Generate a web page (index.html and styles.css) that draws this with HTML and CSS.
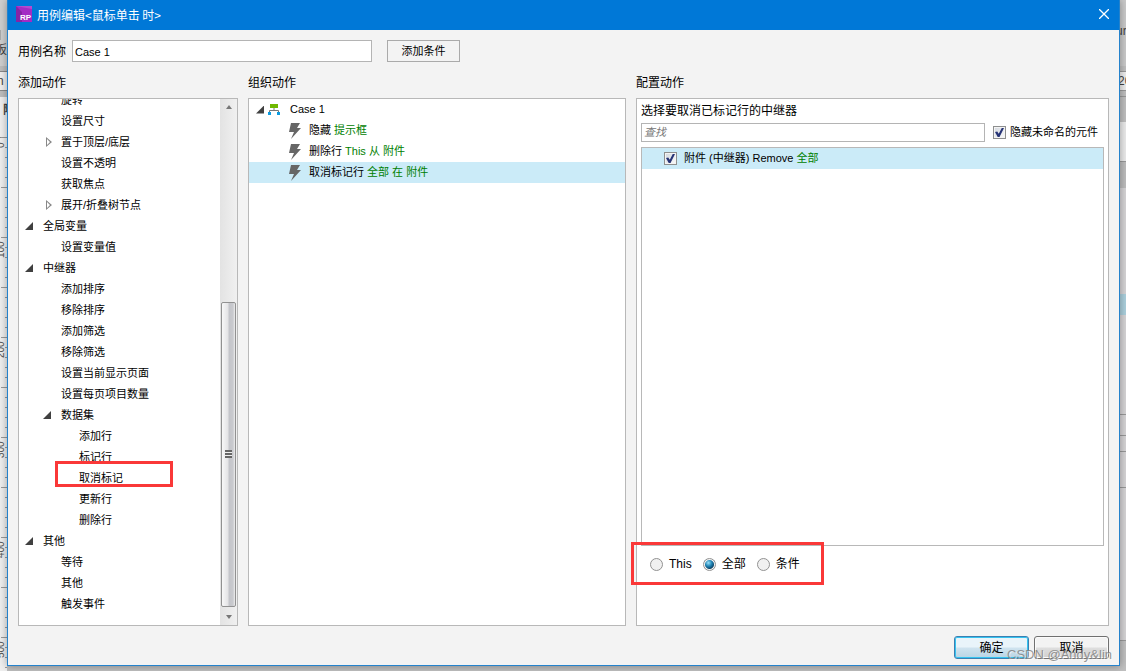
FILE: index.html
```
<!DOCTYPE html>
<html lang="zh-CN">
<head>
<meta charset="utf-8">
<title>用例编辑</title>
<link rel="stylesheet" href="styles.css">
</head>
<body>
<svg class="strip strip-left" width="7" height="671" aria-hidden="true">
  <defs>
    <pattern id="minor" y="137" width="7" height="10" patternUnits="userSpaceOnUse"><path d="M5 .5h2" stroke="#999"/></pattern>
    <pattern id="major" y="137" width="7" height="50" patternUnits="userSpaceOnUse"><path d="M1 .5h6" stroke="#999"/></pattern>
  </defs>
  <rect width="7" height="671" fill="#efefef"/>
  <rect width="7" height="66" fill="#cfcfcf"/>
  <rect y="66" width="7" height="5" fill="#bdbdbd"/>
  <rect y="91" width="7" height="6" fill="#bdbdbd"/>
  <path d="M0 30v10M0 71.500h7M0 90.500h7M0 137.500h7" stroke="#888"/>
  <rect y="137" width="7" height="534" fill="url(#minor)"/>
  <rect y="137" width="7" height="534" fill="url(#major)"/>
  <text x="-5" y="54" class="bg-text cjk">板</text>
  <text x="-3" y="85" class="bg-text">n</text>
  <text x="3" y="114" class="bg-text cjk bold">附</text>
  <g class="bg-num">
    <text transform="translate(4 148) rotate(-90)">0</text>
    <text transform="translate(4 258) rotate(-90)">100</text>
    <text transform="translate(4 358) rotate(-90)">200</text>
    <text transform="translate(4 458) rotate(-90)">300</text>
    <text transform="translate(4 558) rotate(-90)">400</text>
    <text transform="translate(4 658) rotate(-90)">500</text>
  </g>
</svg>
<main class="dialog">
  <header class="titlebar">
    <svg class="logo" width="16" height="16" viewBox="0 0 16 16" aria-hidden="true">
      <rect width="16" height="16" fill="#a32cc4"/><path d="M0 0l6 6v10H0z" fill="#8524a5"/><path d="M0 0h16v3z" fill="#b44bd0"/>
      <text x="4" y="14" class="logo-text">RP</text>
    </svg>
    <h1>用例编辑&lt;鼠标单击 时&gt;</h1>
    <button class="close" type="button" aria-label="关闭"><svg width="10" height="10" viewBox="0 0 10 10"><path d="M0 0l10 10M10 0L0 10" stroke="#fff" stroke-width="1.300"/></svg></button>
  </header>

  <form class="content">
    <div class="name-row">
      <label for="name">用例名称</label>
      <input id="name" class="field name-field" type="text" value="Case 1">
      <button class="flat-button" type="button">添加条件</button>
    </div>

    <div class="columns">
      <section class="column">
        <h2>添加动作</h2>
        <div class="panel tree-panel">
          <ul class="tree">
            <li class="l1">旋转</li>
            <li class="l1">设置尺寸</li>
            <li class="l1 closed">置于顶层/底层</li>
            <li class="l1">设置不透明</li>
            <li class="l1">获取焦点</li>
            <li class="l1 closed">展开/折叠树节点</li>
            <li class="l0 open">全局变量</li>
            <li class="l1">设置变量值</li>
            <li class="l0 open">中继器</li>
            <li class="l1">添加排序</li>
            <li class="l1">移除排序</li>
            <li class="l1">添加筛选</li>
            <li class="l1">移除筛选</li>
            <li class="l1">设置当前显示页面</li>
            <li class="l1">设置每页项目数量</li>
            <li class="l1 open">数据集</li>
            <li class="l2">添加行</li>
            <li class="l2">标记行</li>
            <li class="l2">取消标记<span class="mark mark-tree"></span></li>
            <li class="l2">更新行</li>
            <li class="l2">删除行</li>
            <li class="l0 open">其他</li>
            <li class="l1">等待</li>
            <li class="l1">其他</li>
            <li class="l1">触发事件</li>
          </ul>
          <div class="scrollbar" aria-hidden="true">
            <span class="arrow arrow-up"></span>
            <div class="track"><div class="thumb"><span class="grip"></span></div></div>
            <span class="arrow arrow-down"></span>
          </div>
        </div>
      </section>

      <section class="column">
        <h2>组织动作</h2>
        <div class="panel">
          <ul class="actions">
            <li class="case open"><svg width="12" height="12" viewBox="0 0 12 12" aria-hidden="true"><path d="M2 0h8v4H2z" fill="#6fb800"/><path d="M6 4v2M1.500 8V6.500h9V8" fill="none" stroke="#777"/><path d="M0 8h3v3H0zM9 8h3v3H9z" fill="#0b9be0"/></svg>Case 1</li>
            <li><svg width="12" height="16" viewBox="0 0 12 16" aria-hidden="true"><path d="M2 0h9L8 5h4L2 16l3-7H0z" fill="#666"/></svg><span>隐藏 <em>提示框</em></span></li>
            <li><svg width="12" height="16" viewBox="0 0 12 16" aria-hidden="true"><path d="M2 0h9L8 5h4L2 16l3-7H0z" fill="#666"/></svg><span>删除行 <em>This 从 附件</em></span></li>
            <li class="selected"><svg width="12" height="16" viewBox="0 0 12 16" aria-hidden="true"><path d="M2 0h9L8 5h4L2 16l3-7H0z" fill="#666"/></svg><span>取消标记行 <em>全部 在 附件</em></span></li>
          </ul>
        </div>
      </section>

      <section class="column">
        <h2>配置动作</h2>
        <div class="panel config">
          <h3>选择要取消已标记行的中继器</h3>
          <div class="search-row">
            <input class="field search" type="text" placeholder="查找" aria-label="查找">
            <label class="check"><input type="checkbox" checked>隐藏未命名的元件</label>
          </div>
          <div class="targets">
            <label class="check target"><input type="checkbox" checked><span>附件 (中继器) Remove <em>全部</em></span></label>
          </div>
          <div class="radios">
            <label><input type="radio" name="scope">This</label>
            <label><input type="radio" name="scope" checked>全部</label>
            <label><input type="radio" name="scope">条件</label>
            <span class="mark mark-radios"></span>
          </div>
        </div>
      </section>
    </div>

    <footer>
      <button class="glossy primary" type="button">确定</button>
      <button class="glossy" type="button">取消</button>
      <span class="watermark">CSDN @Andy&amp;lin</span>
    </footer>
  </form>
</main>
<svg class="strip strip-right" width="6" height="671" aria-hidden="true">
  <rect width="6" height="671" fill="#d6d4d6"/>
  <rect width="6" height="66" fill="#cacaca"/>
  <rect y="66" width="6" height="56" fill="#bfbfbf"/>
  <rect y="72" width="6" height="18" fill="#eee"/>
  <rect y="122" width="6" height="40" fill="#ebebeb"/>
  <rect y="162" width="6" height="26" fill="#bdbdbd"/>
  <rect y="294" width="6" height="21" fill="#acd0dd"/>
  <rect y="641" width="6" height="30" fill="#c0c0c0"/>
  <path d="M0 71.500h6M0 90.500h6M0 96.500h6M0 161.500h6M0 414.500h6M0 435.500h6M0 451.500h6M0 487.500h6M0 640.500h6" stroke="#999"/>
  <text x="-4" y="35" class="bg-text">ur</text>
  <text x="-2" y="85" class="bg-text">20</text>
</svg>
</body>
</html>
```
FILE: styles.css
```
* { box-sizing: border-box; }

body {
  margin: 0;
  height: 100vh;
  min-height: 600px;
  padding-bottom: 5px;
  display: grid;
  grid-template-columns: 7px minmax(0, 1fr) 6px;
  grid-template-rows: minmax(0, 1fr);
  background: #bfbfbf;
  overflow: hidden;
  color: #000;
  font: 11px/21px "Liberation Sans", Arial, "Noto Sans CJK SC", sans-serif;
}

h1, h2, h3, ul { margin: 0; padding: 0; font-weight: normal; font-size: 12px; }
ul { list-style: none; font-size: 11px; }
em { font-style: normal; color: #008000; }
button, input { font: inherit; color: inherit; margin: 0; }

.strip { display: block; }
.bg-text { font-size: 12px; fill: #444; }
.bold { font-weight: bold; }
.bg-num { font-size: 10px; fill: #555; }

.dialog {
  position: relative;
  display: flex;
  flex-direction: column;
  background: #f3f3f3;
  border: 1px solid #2482cc;
  border-top: 0;
  box-shadow: 0 0 8px rgba(0, 0, 0, .35);
}

.titlebar {
  flex: none;
  height: 30px;
  display: flex;
  align-items: center;
  gap: 5px;
  padding: 0 10px 2px 8px;
  background: #0078d7;
  color: #fff;
}
.titlebar h1 { line-height: 20px; padding-top: 2px; font-family: "Noto Sans CJK SC", sans-serif; }
.logo-text { font-size: 8px; font-weight: bold; fill: #fff; }
.close {
  margin-left: auto;
  padding: 0;
  width: 10px;
  height: 10px;
  border: 0;
  background: none;
}
.close svg { display: block; }

.content {
  flex: 1;
  min-height: 0;
  display: flex;
  flex-direction: column;
  padding: 10px 10px 6px;
}

.name-row { display: flex; align-items: center; height: 22px; font-size: 12px; }
.name-row label { padding-top: 2px; }
.field {
  height: 22px;
  padding: 2px 2px 0;
  border: 1px solid #b4b4b4;
  border-radius: 0;
  background: #fff;
  font-size: 11px;
  outline: 0;
}
.name-field { width: 300px; margin: 0 15px 0 6px; }
.flat-button {
  width: 73px;
  height: 22px;
  padding: 0;
  border: 1px solid #aaa;
  background: #f3f3f3;
  font-size: 11px;
  line-height: 20px;
}

.columns {
  flex: 1;
  min-height: 0;
  margin-top: 10px;
  display: grid;
  grid-template-columns: 220px minmax(0, 378fr) minmax(0, 473fr);
  gap: 10px;
}
.column { display: flex; flex-direction: column; min-width: 0; min-height: 0; }
h2 { line-height: 22px; margin-bottom: 4px; }
.panel {
  flex: 1;
  min-height: 0;
  border: 1px solid #b8b8b8;
  background: #fff;
}

.tree-panel { display: flex; overflow: hidden; }
.tree {
  flex: 1;
  display: flex;
  flex-direction: column;
  justify-content: flex-end;
  padding-bottom: 10px;
}
.tree li { position: relative; flex: none; height: 21px; white-space: nowrap; }
.l0 { padding-left: 24px; }
.l1 { padding-left: 42px; }
.l2 { padding-left: 60px; }
.open::before, .closed::before {
  content: "";
  display: inline-block;
  width: 8px;
  height: 8px;
  margin-left: -18px;
  margin-right: 10px;
  background: #404040;
  clip-path: polygon(100% 0, 100% 100%, 0 100%);
}
.closed::before {
  width: 6px;
  height: 10px;
  margin-left: -15px;
  margin-right: 9px;
  vertical-align: -1px;
  clip-path: polygon(0 0, 100% 50%, 0 100%, 0 0, 1px 2px, 1px 8px, 4px 50%, 1px 2px);
  background: #888;
}

.scrollbar {
  width: 17px;
  padding: 6px 1px;
  display: flex;
  flex-direction: column;
  align-items: center;
  background: linear-gradient(90deg, #e3e3e3, #f0f0f0);
}
.arrow { border: 3px solid transparent; }
.arrow-up { border-top: 0; border-bottom: 4px solid #777; }
.arrow-down { border-bottom: 0; border-top: 4px solid #777; }
.track {
  flex: 1;
  width: 100%;
  margin: 6px 0 8px;
  display: flex;
  flex-direction: column;
  justify-content: flex-end;
}
.thumb {
  height: 62%;
  display: grid;
  place-items: center;
  border: 1px solid #919191;
  border-radius: 2px;
  background: linear-gradient(90deg, #f8f8f8, #e4e4e6 45%, #c4c5ca 55%, #c9cace 85%, #eee);
}
.grip {
  width: 7px;
  height: 8px;
  background: repeating-linear-gradient(#666 0 2px, #eee 2px 3px);
}

.mark { position: absolute; border: 3px solid #fa3838; pointer-events: none; }
.mark-tree { left: 36px; top: -7px; width: 118px; height: 26px; }
.mark-radios { left: -10px; top: -4px; width: 193px; height: 43px; }

.actions li { display: flex; align-items: center; height: 21px; padding-left: 40px; gap: 8px; white-space: nowrap; }
.actions .case { padding-left: 25px; gap: 10px; }
.actions .case::before { margin-right: -6px; }
.selected { background: #cbebf8; }

.config { padding: 0 4px; display: flex; flex-direction: column; }
h3 { line-height: 24px; }
.search-row { display: flex; align-items: center; gap: 8px; height: 19px; }
.search { flex: 1; min-width: 0; height: 19px; padding-top: 0; }
.search::placeholder { color: #777; opacity: 1; font-style: italic; }
.check { display: flex; align-items: center; gap: 4px; padding-right: 6px; white-space: nowrap; }
.check input {
  appearance: none;
  width: 13px;
  height: 13px;
  display: grid;
  place-items: center;
  border: 1px solid #8e8f8f;
  background: linear-gradient(135deg, #d3d8df, #fbfbfb);
  box-shadow: inset 0 0 0 1px #f4f4f4;
}
.check input::before {
  content: "";
  width: 9px;
  height: 9px;
  background: #273476;
  clip-path: polygon(0 45%, 25% 40%, 42% 65%, 75% 0, 100% 0, 50% 100%, 30% 100%);
}
.targets {
  flex: 1;
  min-height: 0;
  margin-top: 5px;
  border: 1px solid #b8b8b8;
}
.target { height: 21px; padding-left: 22px; gap: 7px; background: #cbebf8; }

.radios {
  position: relative;
  display: flex;
  gap: 11px;
  height: 79px;
  padding: 8px 9px;
  font-size: 12px;
}
.radios label { display: flex; align-items: center; height: 21px; gap: 6px; }
.radios input {
  appearance: none;
  width: 13px;
  height: 13px;
  border: 1px solid #929292;
  border-radius: 50%;
  background: #f0f0f0;
}
.radios input:checked {
  background: radial-gradient(circle at 50% 50%, transparent 4px, #f3f3f3 5px), radial-gradient(circle at 40% 35%, #9be2fa, #1f83b4 35%, #0b3c5e 65%);
}

footer {
  position: relative;
  display: flex;
  justify-content: flex-end;
  gap: 5px;
  margin-top: 10px;
}
.glossy {
  width: 75px;
  height: 23px;
  padding: 2px 0 0;
  border: 1px solid #707070;
  border-radius: 3px;
  background: linear-gradient(#f3f3f3 0 48%, #dedede 52%, #cfcfcf);
  box-shadow: inset 0 0 0 1px #fbfbfb;
  font-size: 12px;
  line-height: 19px;
}
.primary {
  border-color: #3c7fb1;
  background: linear-gradient(#e9f4fa 0 48%, #cfe3ef 52%, #b9d4e4);
  box-shadow: inset 0 0 0 1px #35c3f0;
}
.watermark {
  position: absolute;
  right: -3px;
  top: 8px;
  font-size: 13px;
  color: rgba(130, 130, 130, .85);
  text-shadow: 1px 1px 0 rgba(255, 255, 255, .6);
  white-space: nowrap;
  pointer-events: none;
}
```
